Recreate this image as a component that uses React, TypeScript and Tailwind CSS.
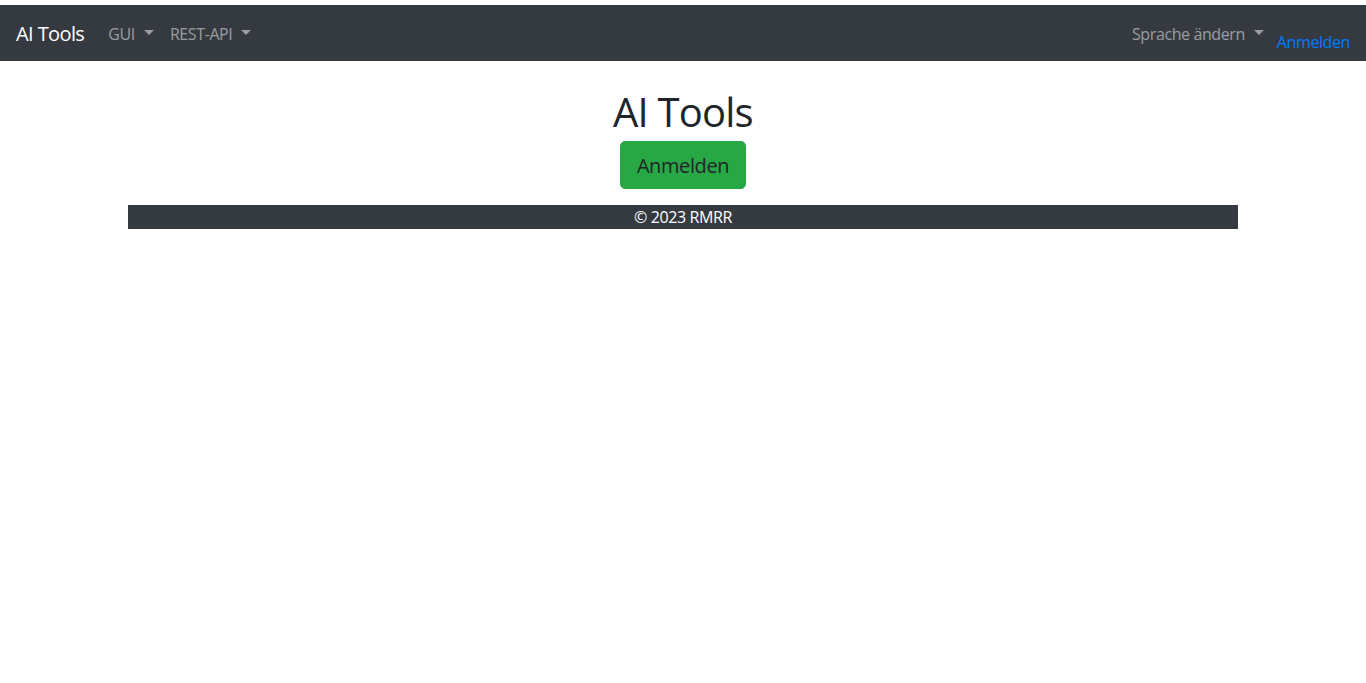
function Caret() {
  return (
    <span className="ml-[9px] inline-block h-0 w-0 translate-y-[-3px] border-x-[5px] border-t-[5px] border-x-transparent border-t-current align-middle" />
  );
}

const navLinks = ["GUI", "REST-API"];

export default function App() {
  return (
    <div className="min-h-[683px] bg-white pt-[5px] font-['Open_Sans',sans-serif] tracking-[-0.4px] text-[#212529]">
      <nav className="flex h-[56px] items-center justify-between bg-[#343a40] px-4">
        <div className="flex items-center pt-[2px]">
          <a className="mr-4 text-[20px] leading-[30px] tracking-[-0.6px] text-white">AI Tools</a>
          <ul className="flex items-center">
            {navLinks.map((l) => (
              <li key={l}>
                <a className="px-2 text-[16px] leading-6 text-white/50">
                  {l}
                  <Caret />
                </a>
              </li>
            ))}
          </ul>
        </div>
        <div className="flex items-center pt-[2px]">
          <a className="px-2 text-[16px] leading-6 text-white/50">
            Sprache ändern
            <Caret />
          </a>
          <a className="ml-[5px] mt-[16px] text-[16px] leading-6 text-[#007bff]">Anmelden</a>
        </div>
      </nav>

      <main className="mx-auto mt-6 max-w-[1140px] px-[15px] text-center">
        <h1 className="mb-[5px] pt-[3px] text-[40px] leading-[48px] font-normal tracking-[-0.8px]">AI Tools</h1>
        <button className="h-[48px] rounded-[5px] border border-[#28a745] bg-[#28a745] px-4 text-[20px] leading-[30px] text-[#212529]">
          <span className="relative top-[1px]">Anmelden</span>
        </button>
        <footer className="mt-4 bg-[#343a40] text-[16px] leading-6 text-white">© 2023 RMRR</footer>
      </main>
    </div>
  );
}
